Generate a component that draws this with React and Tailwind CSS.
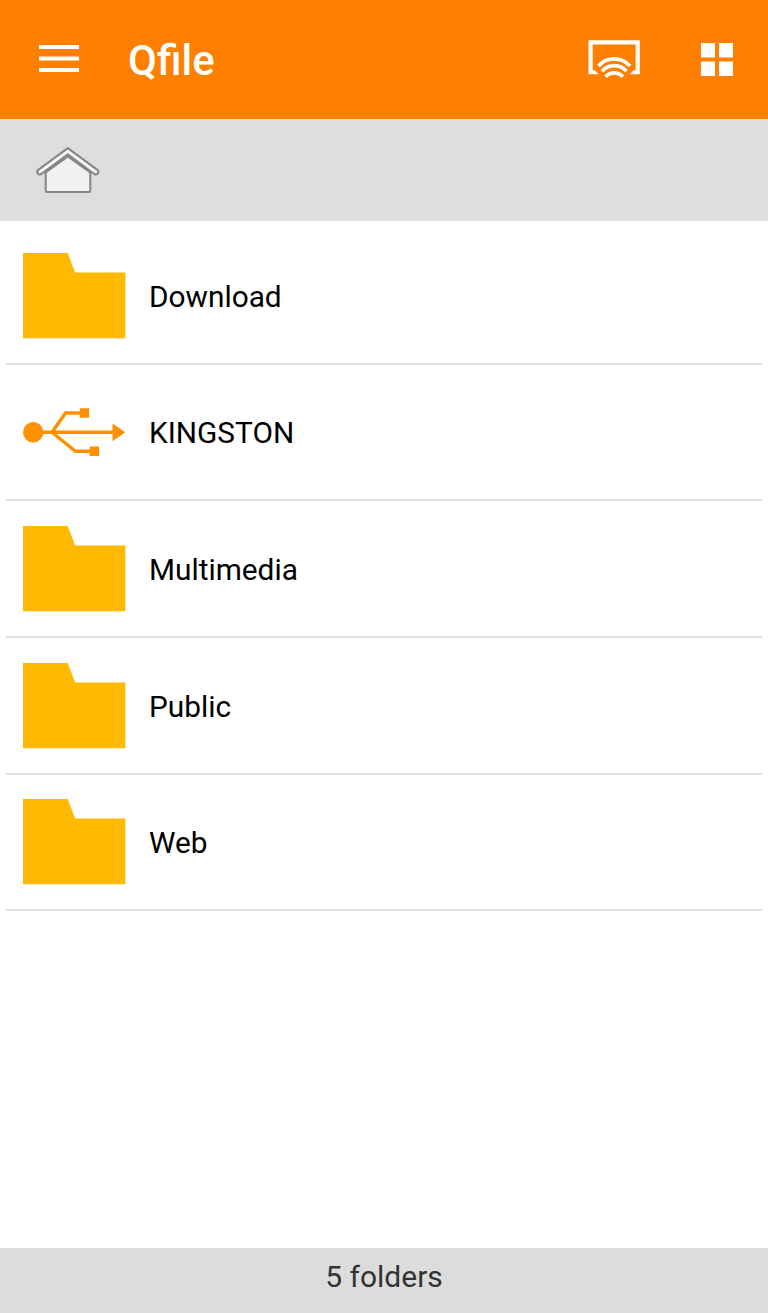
import React from 'react';

const items = [
  { name: 'Download', type: 'folder' },
  { name: 'KINGSTON', type: 'usb' },
  { name: 'Multimedia', type: 'folder' },
  { name: 'Public', type: 'folder' },
  { name: 'Web', type: 'folder' },
];

const MenuIcon = () => (
  <svg width="40" height="28" viewBox="0 0 40 28" fill="#fff">
    <path d="M0 0h40v4H0zM0 11.5h40v4H0zM0 23h40v4H0z" />
  </svg>
);

const CastIcon = () => (
  <svg width="52" height="40" viewBox="0 0 52 40" fill="none">
    <path d="M0.5 0.3H51.8V34.3H42L45.6 30.3H47.6V4.5H4.7V30.3H6.7L10.6 34.3H0.5z" fill="#fff" />
    <g stroke="#fff" strokeWidth="3.7" strokeLinecap="butt">
      <path d="M10.4 26A21.2 21.2 0 0 1 42 26" />
      <path d="M14 31.3A15.8 15.8 0 0 1 38.4 31.3" />
      <path d="M17.6 36.8A11.4 11.4 0 0 1 34.8 36.8" />
    </g>
  </svg>
);

const GridIcon = () => (
  <svg width="32" height="33" viewBox="0 0 32 33" fill="#fff">
    <path d="M0 0h14v14.5H0zM18 0h14v14.5H18zM0 18.5h14V33H0zM18 18.5h14V33H18z" />
  </svg>
);

const HomeIcon = () => (
  <svg width="64" height="48" viewBox="0 0 64 48" stroke="#868686" strokeWidth="2.1" strokeLinejoin="round">
    <path d="M9.7 25.5L31.8 9.5L54.3 25.5V43.3Q54.3 45 52.7 45H11.3Q9.7 45 9.7 43.3z" fill="#f1f1f1" />
    <path
      d="M31.8 1.2L61.6 23.2Q63 24.6 62 26.2Q60.6 28.3 58.4 27L31.8 7.4L5.2 27Q3 28.3 1.6 26.2Q0.6 24.6 2 23.2z"
      fill="#f7f7f7"
    />
  </svg>
);

const FolderIcon = () => (
  <svg width="103" height="86" viewBox="0 0 103 86">
    <path d="M0 0H44.7L52.2 19.6H102.4V85.2H0z" fill="#ffb900" />
  </svg>
);

const UsbIcon = () => (
  <svg width="103" height="50" viewBox="0 0 103 50" fill="#ff9100">
    <circle cx="10.2" cy="25.2" r="10.2" />
    <path d="M89.5 16.4L102.3 25.2L89.5 34.2zM56.7 1.2h9.4v9.6h-9.4zM66.7 39.6h9.4v9.4h-9.4z" />
    <path
      d="M18 25.3H91M29 25.3L42.5 6H58M29 25.3L52.5 44.2H68"
      fill="none"
      stroke="#ff9100"
      strokeWidth="3.4"
    />
  </svg>
);

const Row = ({ name, type }) => (
  <li className="flex h-[136.67px] items-center border-b-2 border-[#e2e2e2] pl-[17px]">
    <div className="mr-[23px] flex w-[103px] shrink-0 items-center pt-px">
      {type === 'usb' ? <UsbIcon /> : <FolderIcon />}
    </div>
    <span className="pt-[3px] text-[29.8px] leading-9 text-black">{name}</span>
  </li>
);

const App = () => {
  return (
    <div className="flex h-[1313px] w-[768px] flex-col overflow-hidden bg-white font-['Roboto',sans-serif]">
      {/* App bar */}
      <header className="flex h-[119px] shrink-0 items-center bg-[#ff8000] pr-[35px] pl-[39px]">
        <button aria-label="Menu" className="-mt-0.5">
          <MenuIcon />
        </button>
        <h1 className="ml-[49px] pt-[3px] text-[42px] leading-[50px] font-medium text-white">Qfile</h1>
        <div className="ml-auto flex items-center gap-[61px]">
          <button aria-label="Cast">
            <CastIcon />
          </button>
          <button aria-label="Grid view">
            <GridIcon />
          </button>
        </div>
      </header>

      {/* Breadcrumb */}
      <nav className="flex h-[102px] shrink-0 items-center bg-[#dedede] pt-0.5 pl-9">
        <HomeIcon />
      </nav>

      <ul className="flex-1 px-1.5 pt-[7px]">
        {items.map(item => (
          <Row key={item.name} name={item.name} type={item.type} />
        ))}
      </ul>

      <footer className="flex h-[65px] shrink-0 justify-center bg-[#dcdcdc] pt-[11px] text-[30px] leading-9 text-[#333]">
        {items.length} folders
      </footer>
    </div>
  );
};

export default App;
